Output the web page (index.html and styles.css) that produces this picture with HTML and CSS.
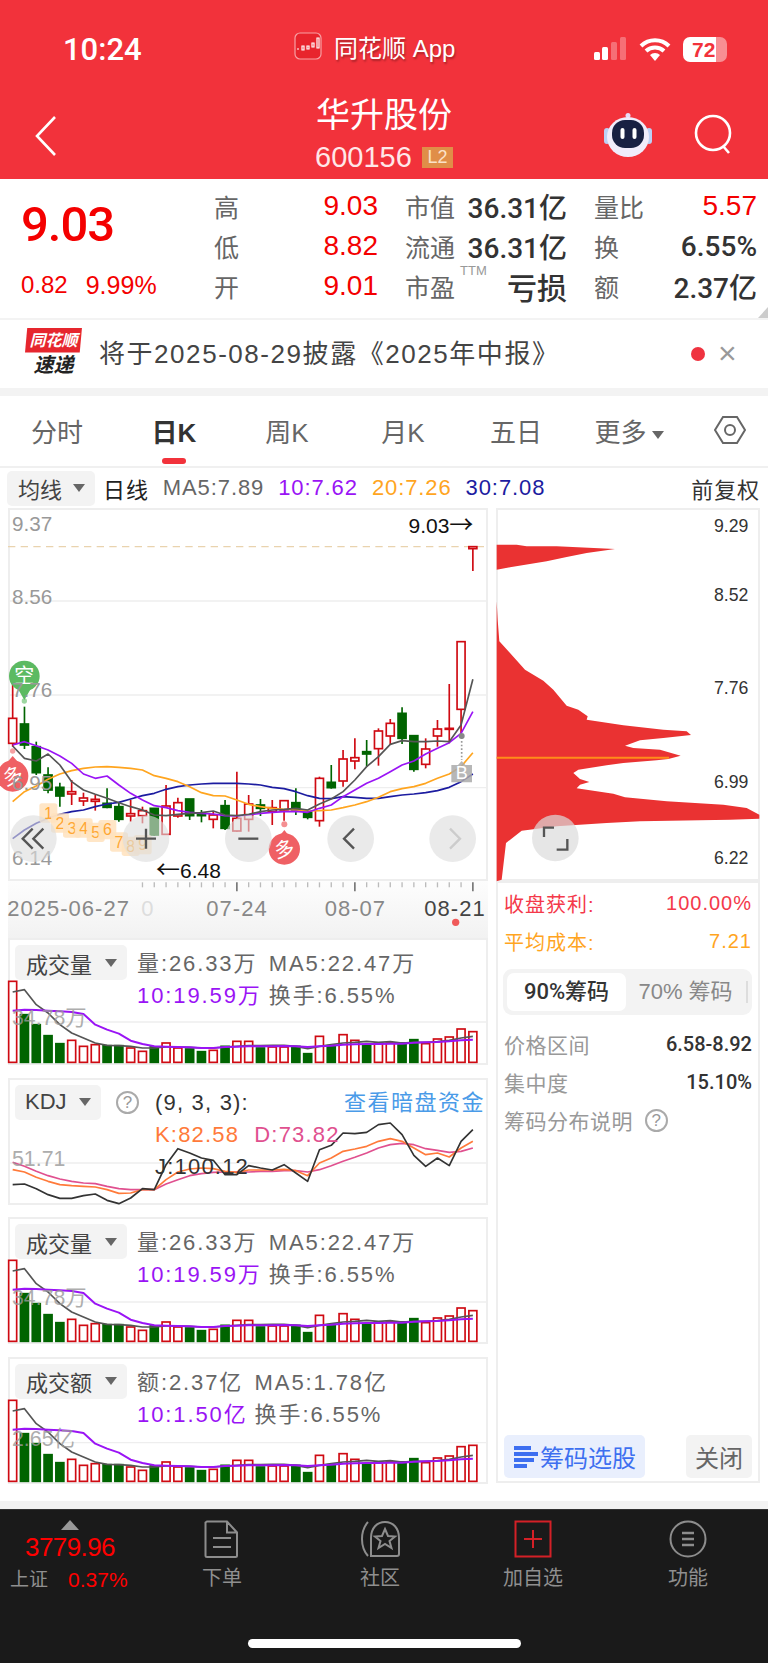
FILE: index.html
```html
<!DOCTYPE html>
<html lang="zh-CN">
<head>
    <meta charset="UTF-8">
    <meta name="viewport" content="width=device-width, initial-scale=1.0">
    <title>华升股份</title>
    <link rel="stylesheet" href="styles.css">
</head>
<body>
    <!-- red header: status bar + title -->
    <header class="header">
        <div class="status">
            <span class="time">10:24</span>
            <div class="app-name">
                <svg class="app-logo" viewBox="0 0 28 28">
                    <rect x="1" y="1" width="26" height="26" rx="5" fill="#e8242d" stroke="#f7a0a4" stroke-width="1.2"/>
                    <path d="M3 17h2M8 14h2v4H8zM13 14h2v3h-2zM18 11h2v4h-2zM23 6h2v10h-2z" fill="none" stroke="#fff" stroke-width="1.2"/>
                </svg>
                <span>同花顺 App</span>
            </div>
            <div class="status-icons">
                <svg width="34" height="24" viewBox="0 0 34 24">
                    <rect x="1" y="15" width="6" height="8" rx="1.5" fill="#fff"/>
                    <rect x="9" y="10" width="6" height="13" rx="1.5" fill="#fff"/>
                    <rect x="18" y="5" width="6" height="18" rx="1.5" fill="#fff" opacity=".3"/>
                    <rect x="27" y="0" width="6" height="23" rx="1.5" fill="#fff" opacity=".3"/>
                </svg>
                <svg width="32" height="24" viewBox="0 0 32 24">
                    <path d="M2 9a20 20 0 0 1 28 0M7 14a13 13 0 0 1 18 0" fill="none" stroke="#fff" stroke-width="4"/>
                    <path d="M11 18a7 7 0 0 1 10 0l-5 6z" fill="#fff"/>
                </svg>
                <div class="battery"><span>72</span></div>
            </div>
        </div>
        <div class="titlebar">
            <svg class="back" width="24" height="42" viewBox="0 0 24 42">
                <path d="M21 2 3 21l18 19" fill="none" stroke="#fff" stroke-width="2.6"/>
            </svg>
            <div class="title">
                <h1>华升股份</h1>
                <div class="code">600156<span class="tag-l2">L2</span></div>
            </div>
            <div class="title-icons">
                <svg width="48" height="44" viewBox="0 0 48 44">
                    <circle cx="24" cy="2.500" r="2.500" fill="#e6dcf7"/>
                    <path d="M24 3v4" stroke="#e6dcf7" stroke-width="1.500"/>
                    <rect x="0" y="15" width="6" height="16" rx="3" fill="#bcd0f5"/>
                    <rect x="42" y="15" width="6" height="16" rx="3" fill="#bcd0f5"/>
                    <ellipse cx="24" cy="24" rx="21" ry="20" fill="#f0ecfb"/>
                    <rect x="8" y="7" width="32" height="28" rx="13" fill="#182043"/>
                    <rect x="16.500" y="15" width="4" height="11" rx="2" fill="#fff"/>
                    <rect x="28.500" y="15" width="4" height="11" rx="2" fill="#fff"/>
                </svg>
                <svg width="42" height="42" viewBox="0 0 42 42">
                    <circle cx="20" cy="19" r="17" fill="none" stroke="#fff" stroke-width="2.6"/>
                    <path d="m30 32 6 7" stroke="#fff" stroke-width="2.6"/>
                </svg>
            </div>
        </div>
    </header>

    <!-- quote summary -->
    <section class="quote">
        <div class="quote-main">
            <div class="price">9.03</div>
            <div class="change"><span>0.82</span><span>9.99%</span></div>
        </div>
        <div class="quote-grid">
            <div class="cell"><span class="lbl">高</span><span class="up">9.03</span></div>
            <div class="cell"><span class="lbl">市值</span><span class="val">36.31亿</span></div>
            <div class="cell"><span class="lbl">量比</span><span class="up">5.57</span></div>
            <div class="cell"><span class="lbl">低</span><span class="up">8.82</span></div>
            <div class="cell"><span class="lbl">流通</span><span class="val">36.31亿</span></div>
            <div class="cell"><span class="lbl">换</span><span class="val">6.55%</span></div>
            <div class="cell"><span class="lbl">开</span><span class="up">9.01</span></div>
            <div class="cell"><span class="lbl">市盈<sup>TTM</sup></span><span class="val loss">亏损</span></div>
            <div class="cell"><span class="lbl">额</span><span class="val">2.37亿</span></div>
        </div>
        <i class="corner"></i>
    </section>
    <div class="band thin"></div>

    <!-- notice -->
    <section class="notice">
        <div class="notice-logo">
            <b>同花顺</b>
            <strong>速递</strong>
        </div>
        <p>将于2025-08-29披露《2025年中报》</p>
        <i class="notice-dot"></i>
        <span class="notice-x">×</span>
    </section>
    <div class="band"></div>

    <!-- period tabs -->
    <nav class="tabs">
        <span>分时</span>
        <span class="active">日K</span>
        <span>周K</span>
        <span>月K</span>
        <span>五日</span>
        <span>更多<i class="caret"></i></span>
        <svg width="34" height="32" viewBox="0 0 34 32">
            <path d="M10 3h14l8 13-8 13H10L2 16z" fill="none" stroke="#666" stroke-width="2"/>
            <circle cx="17" cy="16" r="5" fill="none" stroke="#666" stroke-width="2"/>
        </svg>
    </nav>

    <div class="legend">
        <div class="drop">均线<i class="caret"></i></div>
        <span class="legend-day">日线</span>
        <span class="c-gray">MA5:7.89</span>
        <span class="c-purple">10:7.62</span>
        <span class="c-orange">20:7.26</span>
        <span class="c-navy">30:7.08</span>
        <span class="legend-adj">前复权</span>
    </div>

    <main class="board">
        <div class="left">
            <!-- main kline. all chart svgs use a 3x viewBox -->
            <div class="kline">
                <svg class="chart" viewBox="24 -426 1440 1119">
                    <path class="grid" d="M24-147H1464M24 135H1464M24 413H1464"/>
                    <path d="M24-310H1464" stroke="#e9d3ae" stroke-width="4" stroke-dasharray="22 16"/>
                    <g id="candles"></g>
                    <g id="maLines"></g>

                    <!-- buy / sell pins -->
                    <g class="pin-green">
                        <circle cx="73" cy="153" r="8" opacity=".6"/>
                        <path d="M73 150 44 100h58z"/>
                        <circle cx="73" cy="78" r="46"/>
                        <text class="pin-txt" x="73" y="100" text-anchor="middle">空</text>
                    </g>
                    <g class="pin-red">
                        <circle cx="38" cy="303" r="8" opacity=".6"/>
                        <path d="M38 318 10 350h56z"/>
                        <circle cx="38" cy="378" r="47"/>
                        <text class="pin-txt" x="38" y="400" text-anchor="middle" transform="rotate(-18 38 378)">多</text>
                    </g>
                    <g class="pin-red">
                        <circle cx="853" cy="523" r="9" opacity=".7"/>
                        <path d="M853 540 825 575h56z"/>
                        <circle cx="853" cy="597" r="47"/>
                        <text class="pin-txt" x="853" y="619" text-anchor="middle" transform="rotate(-12 853 597)">多</text>
                    </g>

                    <text class="ax" x="36" y="-358">9.37</text>
                    <text class="ax" x="36" y="-138">8.56</text>
                    <text class="ax" x="36" y="140">7.76</text>
                    <text class="ax" x="36" y="420">6.95</text>
                    <text class="ax" x="36" y="645">6.14</text>
                    <text class="mark" x="1420" y="-350" text-anchor="end">9.03<tspan class="arrow">→</tspan></text>
                    <text class="mark" x="468" y="685"><tspan class="arrow">←</tspan>6.48</text>

                    <!-- numbered tags -->
                    <g id="tags"></g>

                    <!-- B marker -->
                    <path d="M1385 262V330" stroke="#999" stroke-width="5" stroke-dasharray="5 6"/>
                    <circle cx="1385" cy="258" r="9" fill="#888"/>
                    <path d="M1354 345h20l11-12 11 12h20v52h-62z" fill="#aaa" opacity=".85"/>
                    <text x="1385" y="388" text-anchor="middle" class="b-txt">B</text>

                    <!-- zoom / pan buttons -->
                    <g class="round">
                        <circle cx="100" cy="566" r="70"/>
                        <circle cx="438" cy="566" r="70"/>
                        <circle cx="745" cy="566" r="70"/>
                        <circle cx="1052" cy="566" r="70"/>
                        <circle cx="1358" cy="566" r="70"/>
                    </g>
                    <g class="round-ico">
                        <path d="M98 536 68 566l30 30M130 536l-30 30 30 30"/>
                        <path d="M408 566h60M438 536v60"/>
                        <path d="M715 566h60"/>
                        <path d="M1062 536l-30 30 30 30"/>
                        <path class="off" d="M1350 536l30 30-30 30"/>
                    </g>
                </svg>
            </div>
            <div class="axis">
                <svg class="chart" viewBox="24 693 1440 171">
                    <g id="ticks"></g>
                    <text class="date" x="22" y="798">2025-06-27</text>
                    <text class="date faint" x="424" y="798">0</text>
                    <text class="date" x="711" y="798" text-anchor="middle">07-24</text>
                    <text class="date" x="1066" y="798" text-anchor="middle">08-07</text>
                    <text class="date dark" x="1365" y="798" text-anchor="middle">08-21</text>
                    <circle cx="1367" cy="817" r="11" fill="#f05a5a"/>
                </svg>
            </div>

            <div class="panels">
                <section class="panel">
                    <svg class="chart sub" viewBox="24 25 1440 381">
                        <path class="grid" d="M24 277H1464"/>
                        <g class="bars"></g>
                        <g class="vol-lines"></g>
                        <text class="ax sm" x="36" y="287">34.78万</text>
                    </svg>
                    <div class="drop">成交量<i class="caret"></i></div>
                    <div class="vals">
                        <span class="c-gray">量:26.33万</span><span class="c-gray">MA5:22.47万</span>
                        <span class="c-purple">10:19.59万</span><span class="c-gray">换手:6.55%</span>
                    </div>
                </section>

                <section class="panel">
                    <svg class="chart sub" viewBox="24 440 1440 381">
                        <path class="grid" d="M24 695H1464"/>
                        <g id="kdjLines"></g>
                        <text class="ax sm" x="36" y="705">51.71</text>
                    </svg>
                    <div class="drop drop-kdj">KDJ<i class="caret"></i></div>
                    <span class="help kdj-help">?</span>
                    <div class="kdj">
                        <div class="kdj-top"><span>(9, 3, 3):</span><span class="c-link">查看暗盘资金</span></div>
                        <div class="kdj-vals"><span class="c-k">K:82.58</span><span class="c-d">D:73.82</span></div>
                        <div>J:100.12</div>
                    </div>
                </section>

                <section class="panel">
                    <svg class="chart sub" viewBox="24 25 1440 381">
                        <path class="grid" d="M24 280H1464"/>
                        <g class="bars"></g>
                        <g class="vol-lines"></g>
                        <text class="ax sm" x="36" y="290">34.78万</text>
                    </svg>
                    <div class="drop">成交量<i class="caret"></i></div>
                    <div class="vals">
                        <span class="c-gray">量:26.33万</span><span class="c-gray">MA5:22.47万</span>
                        <span class="c-purple">10:19.59万</span><span class="c-gray">换手:6.55%</span>
                    </div>
                </section>

                <section class="panel">
                    <svg class="chart sub" viewBox="24 25 1440 381">
                        <path class="grid" d="M24 282H1464"/>
                        <g class="bars amount"></g>
                        <g class="vol-lines"></g>
                        <text class="ax sm" x="36" y="292">2.65亿</text>
                    </svg>
                    <div class="drop">成交额<i class="caret"></i></div>
                    <div class="vals">
                        <span class="c-gray">额:2.37亿</span><span class="c-gray">MA5:1.78亿</span>
                        <span class="c-purple">10:1.50亿</span><span class="c-gray">换手:6.55%</span>
                    </div>
                </section>
            </div>
        </div>

        <div class="right">
            <!-- chip distribution -->
            <div class="chips">
                <svg class="chart" viewBox="18 25 792 1119">
                    <polygon class="chip" points="20,135 80,135 110,140 200,140 375,148 290,160 230,172 170,185 60,203 20,210"/>
                    <polygon class="chip" points="20,305 23,360 28,425 60,460 105,510 160,543 190,570 230,618 265,630 293,650 290,660 400,677 520,690 590,695 603,706 520,715 450,722 405,738 430,745 510,750 572,768 535,778 500,782 400,790 350,797 265,810 250,820 270,838 298,847 270,855 260,866 370,882 405,893 530,905 700,915 770,925 808,945 808,957 720,960 450,965 350,970 200,980 95,993 48,1030 35,1140 20,1145"/>
                    <path d="M20 774H537" stroke="#ff8c1a" stroke-width="6"/>
                    <text class="chip-ax" x="775" y="98" text-anchor="end">9.29</text>
                    <text class="chip-ax" x="775" y="303" text-anchor="end">8.52</text>
                    <text class="chip-ax" x="775" y="584" text-anchor="end">7.76</text>
                    <text class="chip-ax" x="775" y="864" text-anchor="end">6.99</text>
                    <text class="chip-ax" x="775" y="1092" text-anchor="end">6.22</text>
                    <circle cx="196" cy="1015" r="70" fill="#dcdcdc" opacity=".7"/>
                    <path d="M162 1012V984h30M232 1018v32h-32" fill="none" stroke="#555" stroke-width="7"/>
                </svg>
            </div>
            <div class="info">
                <div class="row c-profit"><span>收盘获利:</span><span>100.00%</span></div>
                <div class="row c-cost"><span>平均成本:</span><span>7.21</span></div>
                <div class="seg">
                    <span class="seg-on">90%筹码</span>
                    <span>70% 筹码</span>
                    <i></i>
                </div>
                <div class="row stat"><span>价格区间</span><b>6.58-8.92</b></div>
                <div class="row stat"><span>集中度</span><b>15.10%</b></div>
                <div class="row stat explain"><span>筹码分布说明</span><span class="help">?</span></div>
                <div class="info-foot">
                    <div class="btn-blue">
                        <svg width="26" height="24" viewBox="0 0 26 24">
                            <path d="M1 3h17M1 9h24M1 15h20M1 21h13" stroke="#3d6ff0" stroke-width="4"/>
                        </svg>
                        筹码选股
                    </div>
                    <div class="btn-gray">关闭</div>
                </div>
            </div>
        </div>
    </main>

    <div class="band tail"></div>

    <!-- bottom dock -->
    <footer class="dock">
        <div class="dock-row">
            <div class="index">
                <i class="tri"></i>
                <div class="index-val">3779.96</div>
                <div class="index-sub"><span>上证</span><b>0.37%</b></div>
            </div>
            <div class="dock-item">
                <svg width="36" height="38" viewBox="0 0 36 38">
                    <path d="M3 1.500h20l10 11v23a1.500 1.500 0 0 1-1.500 1.500h-28.500a1.500 1.500 0 0 1-1.500-1.500v-33zM23 1.500v11h10M9 18h18M9 27h18" fill="none" stroke="#8d8d8d" stroke-width="2"/>
                </svg>
                <span>下单</span>
            </div>
            <div class="dock-item">
                <svg width="42" height="38" viewBox="0 0 42 38">
                    <path d="M9 36C1 27 1 11 9 2" fill="none" stroke="#8d8d8d" stroke-width="2"/>
                    <path d="M12 36V18C12 8 18 2 26 2s14 6 14 16v16q0 2-2 2z" fill="none" stroke="#8d8d8d" stroke-width="2"/>
                    <path d="m26 9 3 7 7 .5-5.500 4.500 2 7-6.500-4-6.500 4 2-7L16 16.500l7-.5z" fill="none" stroke="#8d8d8d" stroke-width="2"/>
                </svg>
                <span>社区</span>
            </div>
            <div class="dock-item">
                <svg width="38" height="38" viewBox="0 0 38 38">
                    <rect x="1.500" y="1.500" width="35" height="35" fill="none" stroke="#d42027" stroke-width="2"/>
                    <path d="M19 10v18M10 19h18" stroke="#d42027" stroke-width="2"/>
                </svg>
                <span>加自选</span>
            </div>
            <div class="dock-item">
                <svg width="38" height="38" viewBox="0 0 38 38">
                    <circle cx="19" cy="19" r="17.500" fill="none" stroke="#8d8d8d" stroke-width="2"/>
                    <path d="M13 13h12M13 19h12M13 25h12" stroke="#8d8d8d" stroke-width="2.500"/>
                </svg>
                <span>功能</span>
            </div>
        </div>
        <div class="home-bar"></div>
    </footer>

    <script src="chart.js"></script>
</body>
</html>
```

FILE: styles.css
```css
/* page */
* {
    box-sizing: border-box;
}

body {
    margin: 0;
    width: 768px;
    height: 1663px;
    overflow: hidden;
    background-color: #fff;
    color: #333;
    font-family: "Liberation Sans", "Noto Sans CJK SC", sans-serif;
    display: flex;
    flex-direction: column;
}

.band {
    height: 8px;
    background-color: #f3f3f3;
}

.band.thin {
    height: 2px;
}

.band.tail {
    margin-top: 17px;
}

/* red header */
.header {
    height: 179px;
    background-color: #f2323b;
    color: #fff;
}

.status {
    height: 98px;
    display: grid;
    grid-template-columns: 294px 1fr auto;
    align-items: center;
    padding-right: 41px;
}

.time {
    padding-left: 63px;
    font-family: Roboto, sans-serif;
    font-size: 31px;
    font-weight: 500;
}

.app-name {
    display: flex;
    align-items: center;
    gap: 12px;
    margin-top: -6px;
    font-size: 24px;
    text-shadow: 1px 2px 2px rgba(0, 0, 0, 0.3);
}

.app-logo {
    width: 28px;
    height: 28px;
}

.status-icons {
    display: flex;
    align-items: center;
    gap: 12px;
}

.battery {
    width: 44px;
    height: 25px;
    border-radius: 7px;
    background: linear-gradient(90deg, #fff 75%, rgba(255, 255, 255, 0.45) 75%);
    color: #f2323b;
    font-size: 21px;
    font-weight: bold;
    line-height: 25px;
    padding-left: 9px;
}

.titlebar {
    height: 81px;
    position: relative;
    display: flex;
    justify-content: center;
}

.back {
    position: absolute;
    left: 34px;
    top: 17px;
}

.title {
    display: flex;
    flex-direction: column;
    align-items: center;
}

.title h1 {
    margin: 0;
    font-size: 34px;
    font-weight: 400;
    line-height: 38px;
    margin-top: -2px;
}

.code {
    display: flex;
    align-items: center;
    margin-top: 7px;
    font-size: 29px;
    line-height: 32px;
    color: #ffe7e8;
}

.tag-l2 {
    margin-left: 10px;
    width: 31px;
    height: 21px;
    background-color: #e08e48;
    color: #fbe2c8;
    font-size: 18px;
    line-height: 21px;
    text-align: center;
}

.title-icons {
    position: absolute;
    right: 33px;
    top: 15px;
    display: flex;
    align-items: center;
    gap: 41px;
}

/* quote */
.quote {
    height: 139px;
    display: flex;
    position: relative;
}

.quote-main {
    width: 214px;
    padding-left: 21px;
    color: #f40000;
}

.price {
    margin-top: 16px;
    font-family: Roboto, sans-serif;
    font-size: 49px;
    font-weight: 500;
    line-height: 60px;
    letter-spacing: -1px;
}

.change {
    display: flex;
    gap: 18px;
    margin-top: 15px;
    font-size: 24px;
    line-height: 30px;
}

.change span + span {
    font-size: 25px;
}

.quote-grid {
    display: grid;
    grid-template-columns: 164px 162px 163px;
    grid-auto-rows: 40px;
    column-gap: 27px;
    padding-top: 7px;
}

.cell {
    display: flex;
    justify-content: space-between;
    align-items: center;
    font-size: 27px;
}

.lbl {
    color: #666;
    font-size: 25px;
    position: relative;
}

.lbl sup {
    position: absolute;
    left: 55px;
    top: -4px;
    font-size: 13px;
    color: #999;
    line-height: 1;
}

.up {
    color: #f40000;
    font-size: 28px;
}

.val {
    font-family: Roboto, "Noto Sans CJK SC", sans-serif;
    font-weight: 500;
    color: #333;
    font-size: 28px;
}

.loss {
    font-size: 30px;
}

.corner {
    position: absolute;
    right: 0;
    bottom: 0;
    border-left: 10px solid transparent;
    border-bottom: 11px solid #ccc;
}

/* notice */
.notice {
    height: 68px;
    display: flex;
    align-items: center;
    padding-left: 25px;
    position: relative;
}

.notice-logo {
    width: 57px;
    margin-top: -4px;
    display: flex;
    flex-direction: column;
    align-items: center;
    font-style: italic;
}

.notice-logo b {
    width: 57px;
    height: 25px;
    background-color: #e6262e;
    color: #fff;
    font-size: 16px;
    line-height: 25px;
    text-align: center;
    clip-path: polygon(4% 0, 100% 0, 96% 100%, 0 100%);
}

.notice-logo strong {
    color: #222;
    font-size: 20px;
    line-height: 24px;
}

.notice p {
    margin: -6px 0 0 17px;
    font-size: 26px;
    letter-spacing: 1.55px;
    color: #444;
    white-space: nowrap;
}

.notice-dot {
    position: absolute;
    left: 691px;
    top: 27px;
    width: 14px;
    height: 14px;
    border-radius: 50%;
    background-color: #ef3340;
}

.notice-x {
    position: absolute;
    left: 718px;
    top: 14px;
    font-size: 32px;
    line-height: 38px;
    color: #999;
}

/* tabs */
.tabs {
    height: 72px;
    display: grid;
    grid-template-columns: 114px 120px 106px 126px 100px 126px 76px;
    justify-items: center;
    align-items: center;
    border-bottom: 2px solid #f0f0f0;
    font-size: 26px;
    color: #666;
    padding-bottom: 2px;
}

.tabs .active {
    color: #333;
    font-weight: bold;
    position: relative;
}

.tabs .active::after {
    content: "";
    position: absolute;
    left: 50%;
    margin-left: -12px;
    bottom: -15px;
    width: 24px;
    height: 6px;
    border-radius: 3px;
    background-color: #f2323b;
}

.caret {
    display: inline-block;
    margin-left: 5px;
    vertical-align: 3px;
    border-left: 6px solid transparent;
    border-right: 6px solid transparent;
    border-top: 8px solid #666;
}

/* legend row */
.legend {
    height: 40px;
    display: flex;
    align-items: center;
    gap: 14px;
    padding: 0 8px 0 7px;
    font-size: 22px;
    letter-spacing: 0.9px;
}

.legend .drop {
    width: 88px;
    margin: 0;
}

.legend-day {
    color: #222;
    margin-left: -6px;
}

.legend-adj {
    margin-left: auto;
    color: #333;
}

.drop {
    height: 35px;
    flex: none;
    width: 112px;
    display: flex;
    align-items: center;
    justify-content: space-between;
    padding: 0 10px 0 11px;
    border-radius: 5px;
    background-color: #f3f3f3;
    color: #444;
    font-size: 22px;
    letter-spacing: 0;
    position: relative;
}

.c-gray { color: #666; }
.c-purple { color: #9a14f5; }
.c-orange { color: #ffa51f; }
.c-navy { color: #1c1ca0; }
.c-link { color: #4a9be8; }
.c-k { color: #ff7a3a; }
.c-d { color: #e0508f; }

/* main board */
.board {
    display: flex;
    gap: 8px;
    padding: 0 8px;
}

.left {
    width: 480px;
}

.right {
    width: 264px;
}

.chart {
    display: block;
    width: 100%;
    height: 100%;
    overflow: visible;
}

.kline,
.chips {
    height: 373px;
    box-shadow: inset 0 0 0 2px #eee;
}

.axis {
    height: 57px;
    background: linear-gradient(#fdfdfd, #f2f2f2);
}

.grid {
    stroke: #eee;
    stroke-width: 4;
}

.ax {
    font-size: 62px;
    fill: #999;
}

.ax.sm {
    font-size: 64px;
    opacity: 0.8;
}

.mark {
    font-size: 63px;
    fill: #111;
}

.arrow {
    font-family: "Noto Sans CJK SC", sans-serif;
    font-size: 72px;
}

.pin-green {
    fill: #5cba62;
}

.pin-red {
    fill: #ef6064;
}

.pin-txt {
    font-size: 60px;
    fill: #fff;
}

.b-txt {
    font-size: 54px;
    fill: #fff;
}

.tag-box {
    fill: #ffe2bd;
    opacity: 0.85;
}

.tag-num {
    font-size: 48px;
    fill: #ffa733;
}

.round {
    fill: #dedede;
    opacity: 0.62;
}

.round-ico path {
    fill: none;
    stroke: #555;
    stroke-width: 7;
}

.round-ico .off {
    stroke: #ccc;
}

.date {
    font-size: 66px;
    fill: #888;
    letter-spacing: 3px;
}

.date.faint {
    fill: #ddd;
}

.date.dark {
    fill: #444;
}

/* sub panels */
.panels {
    display: flex;
    flex-direction: column;
    gap: 12.67px;
}

.panel {
    height: 127px;
    position: relative;
    display: flex;
    align-items: flex-start;
    padding: 7px 0 0 7px;
    box-shadow: inset 0 0 0 2px #eee;
}

.panel .sub {
    position: absolute;
    left: 0;
    top: 0;
}

.vals {
    position: relative;
    display: grid;
    grid-template-columns: auto auto;
    grid-auto-rows: 32px;
    column-gap: 7px;
    margin: 0 0 0 10px;
    font-size: 22px;
    letter-spacing: 1.9px;
    align-items: center;
    white-space: nowrap;
}

.drop-kdj {
    width: 86px;
    padding-left: 10px;
}

.help {
    width: 23px;
    height: 23px;
    flex: none;
    border: 2px solid #aaa;
    border-radius: 50%;
    color: #999;
    font-size: 17px;
    line-height: 19px;
    text-align: center;
    display: inline-block;
}

.kdj-help {
    position: relative;
    margin: 6px 0 0 15px;
}

.kdj {
    position: relative;
    flex: 1;
    margin: 2px 3px 0 16px;
    font-size: 22px;
    line-height: 32px;
    letter-spacing: 1.2px;
    color: #333;
}

.kdj-top {
    display: flex;
    justify-content: space-between;
}

.kdj-top .c-link {
    letter-spacing: 1.5px;
}

.kdj-vals {
    display: flex;
    gap: 15px;
}

/* right column */
.info {
    height: 602px;
    display: flex;
    flex-direction: column;
    padding: 3px 8px 5px 8px;
    box-shadow: inset 0 0 0 2px #eee;
}

.row {
    height: 38px;
    flex: none;
    display: flex;
    justify-content: space-between;
    align-items: center;
    font-size: 20px;
    letter-spacing: 1px;
}

.c-profit { color: #f4394a; }
.c-cost { color: #ffa51f; }

.seg {
    height: 46px;
    flex: none;
    margin: 9px 0 10px -1px;
    padding: 4px;
    border-radius: 9px;
    background-color: #f3f3f3;
    display: flex;
    align-items: center;
    font-size: 22px;
    color: #888;
    position: relative;
}

.seg span {
    width: 121px;
    height: 38px;
    line-height: 38px;
    text-align: center;
}

.seg .seg-on {
    border-radius: 7px;
    background-color: #fff;
    color: #333;
    font-family: Roboto, "Noto Sans CJK SC", sans-serif;
    font-weight: 500;
}

.seg i {
    width: 2px;
    height: 22px;
    margin-left: 1px;
    background-color: #ddd;
}

.stat {
    color: #999;
    font-size: 21px;
    letter-spacing: 0.5px;
}

.stat b {
    color: #333;
    font-family: Roboto, sans-serif;
    font-size: 20px;
    font-weight: 500;
    letter-spacing: 0;
}

.explain {
    justify-content: flex-start;
    gap: 12px;
}

.info-foot {
    margin-top: auto;
    display: flex;
    justify-content: space-between;
}

.btn-blue,
.btn-gray {
    height: 43px;
    border-radius: 5px;
    display: flex;
    align-items: center;
    justify-content: center;
    font-size: 24px;
}

.btn-blue {
    width: 141px;
    gap: 1px;
    background-color: #e9effd;
    color: #3d6ff0;
}

.btn-gray {
    width: 66px;
    background-color: #f3f3f3;
    color: #666;
}

.chip {
    fill: #ea3232;
}

.chip-ax {
    font-size: 53px;
    fill: #333;
}

/* dock */
.dock {
    height: 154px;
    background-color: #1a1a1a;
    display: flex;
    flex-direction: column;
    border-top: 1px solid #333;
}

.dock-row {
    display: grid;
    grid-template-columns: 140px 164px 152px 154px 156px;
    padding-top: 10px;
}

.dock-item {
    display: flex;
    flex-direction: column;
    align-items: center;
    gap: 8px;
    color: #8f8f8f;
    font-size: 20px;
    line-height: 24px;
}

.index {
    display: flex;
    flex-direction: column;
    align-items: center;
}

.tri {
    border-left: 9px solid transparent;
    border-right: 9px solid transparent;
    border-bottom: 10px solid #999;
}

.index-val {
    margin-top: 2px;
    color: #f00;
    font-size: 26px;
    line-height: 30px;
    letter-spacing: -0.6px;
}

.index-sub {
    display: flex;
    align-items: center;
    gap: 20px;
    margin-top: 4px;
    color: #8f8f8f;
    font-size: 19px;
    line-height: 28px;
    align-self: flex-start;
    padding-left: 10px;
}

.index-sub b {
    color: #f00;
    font-size: 21px;
    font-weight: 400;
}

.home-bar {
    width: 273px;
    height: 9px;
    margin: auto auto 15px;
    border-radius: 5px;
    background-color: #fff;
}
```

FILE: chart.js
```js
// chart data is read in 3x page pixels, so it lines up with the svg viewBoxes
var SVG_NS = "http://www.w3.org/2000/svg";
var RED = "#cf0a12";
var GREEN = "#006400";

function xAt(i) {
    return 38 + i * 35.4;
}

function add(parent, tag, attrs) {
    var el = document.createElementNS(SVG_NS, tag);
    for (var key in attrs) {
        el.setAttribute(key, attrs[key]);
    }
    parent.appendChild(el);
    return el;
}

function drawLine(parent, ys, color, width) {
    var pts = ys.map(function (y, i) {
        return xAt(i) + "," + y;
    });
    add(parent, "polyline", {
        points: pts.join(" "),
        fill: "none",
        stroke: color,
        "stroke-width": width,
        "stroke-linejoin": "round"
    });
}

// [up?, wick top, body top, body bottom, wick bottom]
var candles = [
    [1, 50, 205, 280, 290], [0, 170, 222, 285, 297], [0, 275, 290, 368, 375], [0, 352, 375, 420, 430],
    [0, 398, 412, 438, 470], [1, 390, 425, 432, 465], [1, 428, 444, 453, 468], [1, 435, 448, 454, 482],
    [0, 415, 460, 472, 475], [0, 455, 470, 508, 515], [1, 450, 491, 498, 515], [1, 470, 482, 497, 520],
    [0, 475, 475, 555, 558], [1, 405, 468, 553, 555], [1, 443, 458, 498, 503], [0, 447, 447, 497, 510],
    [0, 480, 490, 497, 517], [1, 485, 495, 508, 535], [0, 450, 467, 535, 540], [1, 365, 505, 543, 545],
    [1, 435, 462, 508, 545], [0, 447, 465, 475, 498], [1, 450, 473, 485, 525], [1, 452, 452, 480, 512],
    [0, 415, 458, 480, 495], [0, 483, 487, 502, 508], [1, 380, 385, 512, 530], [0, 345, 397, 413, 416],
    [1, 300, 327, 393, 410], [1, 265, 323, 333, 358], [0, 270, 305, 312, 350], [1, 235, 243, 296, 347],
    [1, 207, 220, 258, 285], [0, 172, 190, 265, 282], [0, 257, 257, 358, 365], [1, 265, 297, 343, 355],
    [1, 210, 237, 258, 290], [1, 102, 235, 238, 280], [1, -25, -25, 178, 250], [1, -310, -310, -304, -237]
];

var ma5 = [288, 325, 333, 312, 345, 395, 420, 433, 445, 458, 470, 480, 495, 497, 493, 490, 488, 483, 495, 497, 493, 485, 480, 478, 475, 480, 462, 447, 425, 390, 350, 320, 283, 272, 275, 275, 273, 275, 225, 88];
var ma10 = [285, 275, 287, 300, 318, 340, 372, 385, 378, 405, 430, 450, 467, 473, 482, 487, 490, 492, 497, 498, 495, 490, 487, 485, 484, 487, 475, 465, 440, 420, 400, 385, 365, 345, 333, 312, 295, 278, 250, 185];
var ma20 = [455, 425, 408, 388, 372, 362, 355, 351, 350, 352, 355, 360, 377, 385, 395, 410, 428, 437, 438, 450, 463, 470, 475, 478, 480, 483, 482, 480, 473, 465, 455, 442, 425, 416, 410, 400, 385, 372, 350, 308];
var ma30 = [566, 540, 520, 505, 493, 485, 480, 470, 462, 457, 447, 437, 430, 418, 410, 405, 402, 400, 400, 400, 402, 405, 412, 416, 425, 437, 445, 446, 440, 442, 445, 445, 440, 435, 432, 428, 422, 412, 395, 372];

var volTops = [155, 255, 285, 318, 342, 332, 350, 345, 348, 348, 355, 365, 352, 340, 355, 358, 366, 362, 350, 335, 335, 355, 352, 352, 350, 372, 320, 348, 315, 332, 345, 340, 340, 340, 330, 342, 328, 322, 298, 306];
var volUp = [1, 0, 0, 0, 0, 1, 1, 1, 0, 0, 1, 1, 0, 1, 1, 0, 0, 1, 0, 1, 1, 0, 1, 1, 0, 0, 1, 0, 1, 1, 0, 1, 1, 0, 0, 1, 1, 1, 1, 1];
var volMa5 = [187, 180, 225, 250, 285, 310, 325, 340, 347, 348, 350, 355, 355, 352, 352, 353, 355, 355, 352, 350, 348, 348, 347, 347, 350, 357, 350, 345, 340, 338, 335, 338, 336, 340, 338, 338, 336, 332, 325, 320];
var volMa10 = [243, 240, 241, 243, 245, 247, 253, 285, 300, 312, 333, 343, 350, 351, 352, 353, 355, 355, 352, 351, 350, 350, 350, 349, 350, 352, 350, 348, 345, 344, 343, 343, 342, 342, 339, 338, 337, 335, 332, 330];

var kdjJ = [760, 758, 772, 790, 801, 801, 793, 788, 807, 817, 800, 772, 775, 700, 652, 665, 680, 687, 730, 730, 703, 710, 716, 700, 725, 750, 655, 642, 605, 607, 603, 580, 575, 610, 672, 705, 680, 703, 630, 595];
var kdjK = [715, 722, 738, 750, 760, 763, 765, 767, 775, 786, 785, 775, 775, 745, 722, 713, 710, 712, 720, 723, 716, 716, 716, 714, 718, 733, 695, 680, 660, 653, 645, 630, 622, 630, 650, 670, 665, 677, 650, 630];
var kdjD = [693, 705, 720, 733, 743, 750, 755, 757, 765, 772, 775, 775, 775, 758, 745, 733, 727, 723, 722, 722, 722, 720, 720, 718, 718, 722, 715, 703, 690, 678, 665, 650, 640, 636, 640, 652, 657, 663, 660, 650];

var tags = [[145, 490, 1], [180, 520, 2], [216, 535, 3], [251, 535, 4], [287, 548, 5], [322, 540, 6], [357, 577, 7], [392, 590, 8], [428, 585, 9]];

// candles
var candleBox = document.getElementById("candles");
candles.forEach(function (c, i) {
    var x = xAt(i);
    var color = c[0] ? RED : GREEN;
    add(candleBox, "path", {
        d: "M" + x + " " + c[1] + "V" + c[4],
        stroke: color,
        "stroke-width": 5
    });
    add(candleBox, "rect", {
        x: x - 12,
        y: c[2],
        width: 24,
        height: c[3] - c[2],
        fill: c[0] ? "#fff" : GREEN,
        stroke: color,
        "stroke-width": 5
    });
});

var maBox = document.getElementById("maLines");
drawLine(maBox, ma30, "#1c1ca0", 5);
drawLine(maBox, ma20, "#ffa51f", 5);
drawLine(maBox, ma10, "#9a14f5", 5);
drawLine(maBox, ma5, "#555", 5);

// numbered tags under the lows
var tagBox = document.getElementById("tags");
tags.forEach(function (t) {
    add(tagBox, "rect", { class: "tag-box", x: t[0] - 27, y: t[1] - 30, width: 54, height: 58, rx: 8 });
    var num = add(tagBox, "text", { class: "tag-num", x: t[0], y: t[1] + 16, "text-anchor": "middle" });
    num.textContent = t[2];
});

// date axis ticks
var tickBox = document.getElementById("ticks");
for (var i = 11; i < 40; i++) {
    var long = i === 19 || i === 29 || i === 39;
    add(tickBox, "path", {
        d: "M" + xAt(i) + " 697V" + (long ? 724 : 712),
        stroke: long ? "#777" : "#bbb",
        "stroke-width": long ? 5 : 4
    });
}

// volume panels share the same series
document.querySelectorAll(".bars").forEach(function (box) {
    var amount = box.classList.contains("amount");
    volTops.forEach(function (top, i) {
        var y = top;
        if (amount && i === 38) y = 294;
        if (amount && i === 39) y = 290;
        add(box, "rect", {
            x: xAt(i) - 12,
            y: y,
            width: 24,
            height: 398 - y,
            fill: volUp[i] ? "#fff" : GREEN,
            stroke: volUp[i] ? RED : GREEN,
            "stroke-width": 5
        });
    });
});

document.querySelectorAll(".vol-lines").forEach(function (box) {
    drawLine(box, volMa5, "#555", 5);
    drawLine(box, volMa10, "#9a14f5", 6);
});

var kdjBox = document.getElementById("kdjLines");
drawLine(kdjBox, kdjD, "#e0508f", 5);
drawLine(kdjBox, kdjK, "#ff7a3a", 5);
drawLine(kdjBox, kdjJ, "#333", 5);
```
